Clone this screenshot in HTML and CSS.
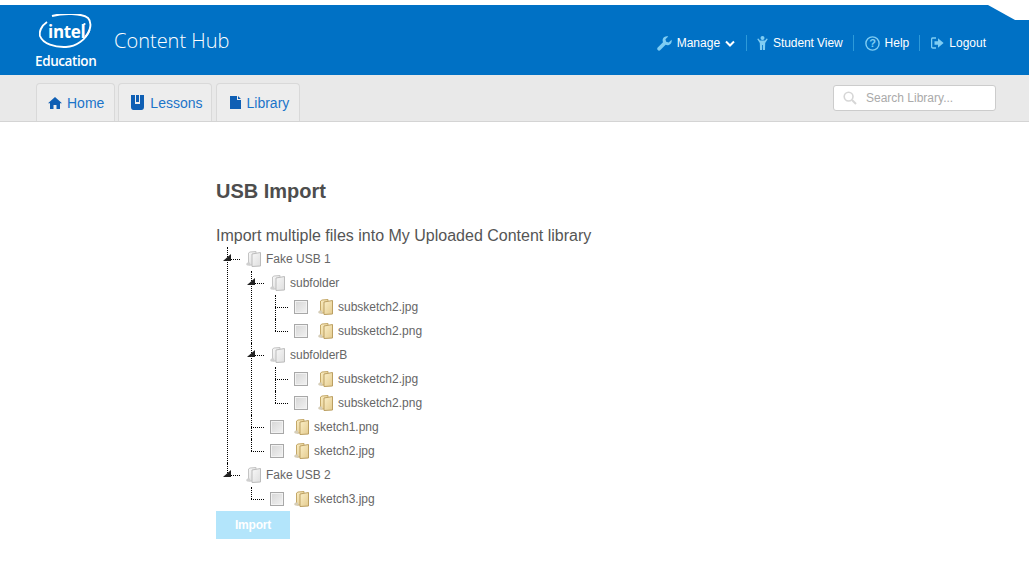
FILE: index.html
```html
<!DOCTYPE html>
<html lang="en">
<head>
  <meta charset="UTF-8">
  <meta name="viewport" content="width=device-width, initial-scale=1.0">
  <title>USB Import</title>
  <link rel="stylesheet" href="styles.css">
</head>
<body>
  <svg class="defs" width="0" height="0">
    <defs>
      <linearGradient id="grey-back" x1="0" y1="0" x2="1" y2="1">
        <stop offset="0" stop-color="#fafafa"/>
        <stop offset="1" stop-color="#d8d8d8"/>
      </linearGradient>
      <linearGradient id="grey-front" x1="0" y1="0" x2="1" y2="1">
        <stop offset="0" stop-color="#f8f8f8"/>
        <stop offset="1" stop-color="#dedede"/>
      </linearGradient>
      <linearGradient id="gold-back" x1="0" y1="0" x2="1" y2="1">
        <stop offset="0" stop-color="#fbeec4"/>
        <stop offset="1" stop-color="#e2c888"/>
      </linearGradient>
      <linearGradient id="gold-front" x1="0" y1="0" x2="1" y2="1">
        <stop offset="0" stop-color="#fbefc8"/>
        <stop offset="1" stop-color="#e4cb8e"/>
      </linearGradient>
    </defs>
    <symbol id="folder-grey" viewBox="0 0 15 16">
      <path d="M2.5 14 L2.5 2 L4 1 L10 .5 L10 14 Z" fill="url(#grey-back)" stroke="#c4c4c4"/>
      <path d="M6 3 L14.5 1.5 L14.5 15 L6 15.5 Z" fill="url(#grey-front)" stroke="#bcbcbc"/>
      <path d="M0 13 L1.5 11.5 L4 11.5 L4.5 14.5 L1 14.5 Z" fill="#cfcfcf"/>
    </symbol>
    <symbol id="folder-gold" viewBox="0 0 15 16">
      <path d="M2.5 14 L2.5 2 L4 1 L10 .5 L10 14 Z" fill="url(#gold-back)" stroke="#c4a868"/>
      <path d="M6 3 L14.5 1.5 L14.5 15 L6 15.5 Z" fill="url(#gold-front)" stroke="#bb9f62"/>
      <path d="M0 13 L1.5 11.5 L4 11.5 L4.5 14.5 L1 14.5 Z" fill="#d5cdb8"/>
    </symbol>
  </svg>

  <header class="topbar">
    <div class="brand">
      <div class="logo">
        <svg class="logo-swoosh" width="54" height="36" viewBox="0 0 54 36">
          <path d="M8 8 C2 12 0 18 1 22 C4 30 16 33.5 27 33 C37 32.5 47 26 50.5 16" fill="none" stroke="#fff" stroke-width="1.9"/>
          <path d="M13 2 C24 -1 43 -1 49 4 C53 8 52 17 46 23" fill="none" stroke="#fff" stroke-width="1.9"/>
          <circle cx="45.5" cy="10" r="1.1" fill="#fff"/>
        </svg>
        <span class="logo-intel">intel</span>
        <span class="logo-edu">Education</span>
      </div>
      <span class="brand-name">Content Hub</span>
    </div>
    <nav class="top-menu">
      <a class="top-link top-link-manage" href="#">
        <svg class="top-icon" width="15" height="15" viewBox="0 0 16 16"><path d="M15.5 4 L12.5 7 L9.8 6.2 L9 3.5 L12 .5 C9.5 -.2 7 1 6.2 3.2 C5.8 4.4 6 5.6 6.4 6.6 L.8 12.2 C0 13 0 14.2 .8 15 C1.6 15.8 2.8 15.8 3.6 15 L9.2 9.4 C10.3 9.9 11.5 10 12.7 9.6 C15 8.8 16.2 6.5 15.5 4 Z" fill="#7fcdf3"/></svg>
        Manage
        <svg width="10" height="7" viewBox="0 0 10 7"><path d="M1 1.5 L5 5.5 L9 1.5" fill="none" stroke="#fff" stroke-width="2"/></svg>
      </a>
      <a class="top-link top-link-student" href="#">
        <svg class="top-icon" width="11" height="14" viewBox="0 0 11 14"><circle cx="5.5" cy="2" r="2" fill="#7fcdf3"/><path d="M.2 3 L1.4 2.4 L3 4.4 L8 4.4 L9.6 2.4 L10.8 3 L8.2 7 L8 14 L5.9 14 L5.9 9 L5.1 9 L5.1 14 L3 14 L2.8 7 Z" fill="#7fcdf3"/></svg>
        Student View
      </a>
      <a class="top-link" href="#">
        <svg class="top-icon" width="15" height="15" viewBox="0 0 15 15"><circle cx="7.5" cy="7.5" r="6.6" fill="none" stroke="#7fcdf3" stroke-width="1.4"/><text class="help-mark" x="7.5" y="11.4" text-anchor="middle">?</text></svg>
        Help
      </a>
      <a class="top-link" href="#">
        <svg class="top-icon" width="13" height="12" viewBox="0 0 13 12"><path d="M5 1 L1.8 1 C1 1 .6 1.5 .6 2.2 L.6 9.8 C.6 10.5 1 11 1.8 11 L5 11" fill="none" stroke="#7fcdf3" stroke-width="1.3"/><path d="M3.5 4.2 L7 4.2 L7 1.2 L12.6 6 L7 10.8 L7 7.8 L3.5 7.8 Z" fill="#7fcdf3"/></svg>
        Logout
      </a>
    </nav>
    <div class="corner"></div>
  </header>

  <div class="subbar">
    <ul class="tabs">
      <li class="tab tab-home">
        <svg width="14" height="12" viewBox="0 0 14 12"><path d="M7 0 L14 6.2 L12 6.2 L12 12 L8.5 12 L8.5 8 L5.5 8 L5.5 12 L2 12 L2 6.2 L0 6.2 Z" fill="#0f5fb4"/></svg>
        Home
      </li>
      <li class="tab tab-lessons">
        <svg width="13" height="15" viewBox="0 0 13 15"><path d="M0 0 L4 0 L4 9 L9 9 L9 0 L13 0 L13 12 C13 14 12 15 10.5 15 L2.5 15 C1 15 0 14 0 12 Z" fill="#0f5fb4"/><path d="M5 0 L8 0 L8 7 L5 7 Z" fill="#0f5fb4"/></svg>
        Lessons
      </li>
      <li class="tab tab-library">
        <svg width="11" height="13" viewBox="0 0 11 13"><path d="M0 0 L7 0 L7 4 L11 4 L11 13 L0 13 Z M8 0 L11 3 L8 3 Z" fill="#0f5fb4"/></svg>
        Library
      </li>
    </ul>
    <div class="search-box">
      <svg width="14" height="14" viewBox="0 0 14 14"><circle cx="5.6" cy="5.6" r="4.4" fill="none" stroke="#d6d6d6" stroke-width="1.6"/><path d="M9 9 L13 13" stroke="#d6d6d6" stroke-width="2"/></svg>
      <span class="search-hint">Search Library...</span>
    </div>
  </div>

  <main class="content">
    <h1 class="page-title">USB Import</h1>
    <p class="page-lead">Import multiple files into My Uploaded Content library</p>

    <ul class="tree">
      <li class="tree-item">
        <div class="tree-row"><span class="twig open"></span><svg class="node-icon"><use href="#folder-grey"/></svg><span class="node-label">Fake USB 1</span></div>
        <ul class="tree-sub">
          <li class="tree-item">
            <div class="tree-row"><span class="twig open"></span><svg class="node-icon"><use href="#folder-grey"/></svg><span class="node-label">subfolder</span></div>
            <ul class="tree-sub">
              <li class="tree-item">
                <div class="tree-row"><span class="twig"></span><span class="check"></span><svg class="node-icon"><use href="#folder-gold"/></svg><span class="node-label">subsketch2.jpg</span></div>
              </li>
              <li class="tree-item">
                <div class="tree-row"><span class="twig"></span><span class="check"></span><svg class="node-icon"><use href="#folder-gold"/></svg><span class="node-label">subsketch2.png</span></div>
              </li>
            </ul>
          </li>
          <li class="tree-item">
            <div class="tree-row"><span class="twig open"></span><svg class="node-icon"><use href="#folder-grey"/></svg><span class="node-label">subfolderB</span></div>
            <ul class="tree-sub">
              <li class="tree-item">
                <div class="tree-row"><span class="twig"></span><span class="check"></span><svg class="node-icon"><use href="#folder-gold"/></svg><span class="node-label">subsketch2.jpg</span></div>
              </li>
              <li class="tree-item">
                <div class="tree-row"><span class="twig"></span><span class="check"></span><svg class="node-icon"><use href="#folder-gold"/></svg><span class="node-label">subsketch2.png</span></div>
              </li>
            </ul>
          </li>
          <li class="tree-item">
            <div class="tree-row"><span class="twig"></span><span class="check"></span><svg class="node-icon"><use href="#folder-gold"/></svg><span class="node-label">sketch1.png</span></div>
          </li>
          <li class="tree-item">
            <div class="tree-row"><span class="twig"></span><span class="check"></span><svg class="node-icon"><use href="#folder-gold"/></svg><span class="node-label">sketch2.jpg</span></div>
          </li>
        </ul>
      </li>
      <li class="tree-item">
        <div class="tree-row"><span class="twig open"></span><svg class="node-icon"><use href="#folder-grey"/></svg><span class="node-label">Fake USB 2</span></div>
        <ul class="tree-sub">
          <li class="tree-item">
            <div class="tree-row"><span class="twig"></span><span class="check"></span><svg class="node-icon"><use href="#folder-gold"/></svg><span class="node-label">sketch3.jpg</span></div>
          </li>
        </ul>
      </li>
    </ul>

    <button class="import-btn" type="button">Import</button>
  </main>
</body>
</html>
```

FILE: styles.css
```css
html, body {
  margin: 0;
  padding: 0;
}

body {
  font-family: "Liberation Sans", Arial, sans-serif;
  color: #4d4d4d;
  background: #fff;
}

.defs {
  display: block;
  height: 0;
}

/* header */
.topbar {
  position: relative;
  display: flex;
  align-items: center;
  justify-content: space-between;
  height: 70px;
  margin-top: 5px;
  padding: 0 43px 0 35px;
  background: #0071c5;
  color: #fff;
}

.corner {
  position: absolute;
  top: 0;
  right: 0;
  width: 41px;
  height: 15px;
  background: #fff;
  clip-path: polygon(0 0, 100% 0, 100% 100%, 66% 100%);
}

.brand {
  display: flex;
  align-items: center;
}

.logo {
  position: relative;
  width: 62px;
  height: 56px;
  margin-top: 3px;
}

.logo-swoosh {
  position: absolute;
  left: 4px;
  top: 0;
}

.logo-intel {
  position: absolute;
  left: 13px;
  top: 7px;
  font: 700 17px/22px "Open Sans", sans-serif;
  letter-spacing: -.3px;
}

.logo-edu {
  position: absolute;
  left: 0;
  bottom: 0;
  font: 600 13.5px/18px "Open Sans", sans-serif;
  letter-spacing: -.4px;
}

.brand-name {
  margin-left: 17px;
  margin-top: 2px;
  font: 300 20px/28px "Open Sans", sans-serif;
}

.top-menu {
  display: flex;
  align-items: center;
  margin-top: 6px;
}

.top-link {
  display: flex;
  align-items: center;
  gap: 5px;
  height: 16px;
  padding: 0 10px 0 11px;
  border-left: 1px solid #2d9ad9;
  color: #fff;
  font-size: 12px;
  text-decoration: none;
}

.top-link:first-child {
  border-left: 0;
}

.top-link:last-child {
  padding-right: 0;
}

.top-link-manage {
  padding-right: 11px;
}

.top-link-student {
  padding-left: 10px;
  letter-spacing: -.08px;
}

.help-mark {
  font: 700 11px "Liberation Sans", sans-serif;
  fill: #7fcdf3;
}

/* tabs row */
.subbar {
  display: flex;
  justify-content: space-between;
  align-items: flex-start;
  height: 46px;
  padding: 0 33px 0 36px;
  background: #e9e9e9;
  border-bottom: 1px solid #d4d4d4;
}

.tabs {
  display: flex;
  gap: 3px;
  list-style: none;
  margin: 8px 0 0;
  padding: 0;
}

.tab {
  display: flex;
  align-items: center;
  gap: 6px;
  height: 37px;
  padding: 0 10px 0 12px;
  border: 1px solid #d9d9d9;
  border-bottom: 0;
  border-radius: 4px 4px 0 0;
  background: #ededed;
  color: #1b74c9;
  font-size: 14px;
}

.tab-home {
  gap: 5px;
  padding-left: 11px;
}

.tab-lessons {
  padding-right: 8px;
}

.tab-library {
  margin-left: 1px;
  padding-left: 13px;
}

.search-box {
  display: flex;
  align-items: center;
  gap: 9px;
  box-sizing: border-box;
  width: 163px;
  height: 26px;
  margin-top: 10px;
  padding-left: 9px;
  background: #fff;
  border: 1px solid #ccc;
  border-radius: 3px;
}

.search-hint {
  color: #aaa;
  font-size: 12px;
}

/* main */
.content {
  padding: 57px 0 0 216px;
}

.page-title {
  margin: 0;
  font-size: 20px;
  line-height: 24px;
  font-weight: 700;
  color: #4d4d4d;
}

.page-lead {
  margin: 23px 0 0;
  font-size: 16px;
  line-height: 20px;
  color: #555;
}

/* tree */
.tree, .tree-sub {
  list-style: none;
  margin: 0;
  padding: 0;
}

.tree {
  margin-top: 1px;
}

.tree-sub {
  padding-left: 24px;
}

.tree-item {
  position: relative;
}

.tree-item::before {
  content: "";
  position: absolute;
  left: 11px;
  top: 0;
  bottom: 0;
  border-left: 1px dotted #000;
}

.tree-item:last-child::before {
  bottom: auto;
  height: 12px;
}

.tree-row {
  display: flex;
  align-items: center;
  height: 24px;
}

.twig {
  position: relative;
  flex: none;
  width: 24px;
  height: 24px;
  margin-right: 6px;
}

.twig::before {
  content: "";
  position: absolute;
  left: 11px;
  top: 12px;
  width: 13px;
  border-top: 1px dotted #000;
}

.twig.open::after {
  content: "";
  position: absolute;
  left: 7px;
  top: 7px;
  width: 8px;
  height: 7px;
  background: #222;
  clip-path: polygon(100% 0, 100% 100%, 0 100%);
}

.check {
  flex: none;
  box-sizing: border-box;
  width: 14px;
  height: 14px;
  margin-right: 10px;
  border: 1px solid #a8a8a8;
  box-shadow: inset 0 0 0 1px #f2f2f2;
  background: linear-gradient(135deg, #d6d6d6, #f2f2f2);
}

.node-icon {
  flex: none;
  width: 15px;
  height: 16px;
  margin-right: 5px;
}

.node-label {
  font-size: 12px;
  color: #666;
}

.import-btn {
  display: block;
  width: 74px;
  height: 28px;
  margin-top: 0;
  padding: 0;
  border: 0;
  background: #b3e5fb;
  color: #fff;
  font: 700 12px "Liberation Sans", sans-serif;
  letter-spacing: -.2px;
}
```
